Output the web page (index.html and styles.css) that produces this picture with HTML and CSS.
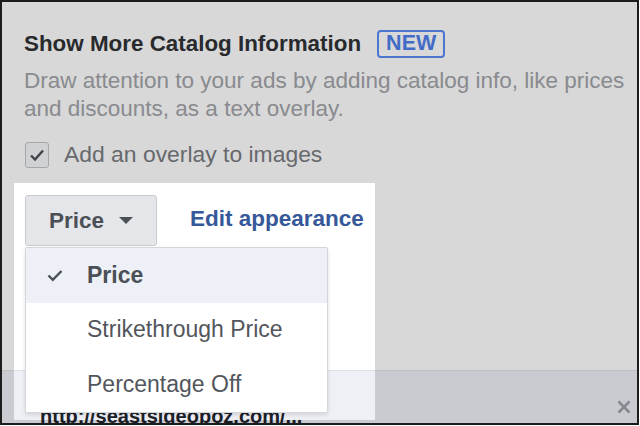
FILE: index.html
```html
<!DOCTYPE html>
<html>
<head>
<meta charset="utf-8">
<link rel="stylesheet" href="styles.css">
</head>
<body>
<div class="frame">
  <div class="main">
    <div class="title-row">
      <h2 class="title">Show More Catalog Information</h2>
      <span class="badge">NEW</span>
    </div>
    <p class="desc">Draw attention to your ads by adding catalog info, like prices and discounts, as a text overlay.</p>
    <label class="check-row">
      <span class="checkbox">
        <svg width="16" height="14" viewBox="0 0 16 14"><path d="M2 7.5 L6 11.5 L14 2.5" fill="none" stroke="#4b4f56" stroke-width="2.4"/></svg>
      </span>
      <span class="check-label">Add an overlay to images</span>
    </label>
    <div class="controls">
      <div class="dropdown">
        <button class="select-btn">Price <span class="caret"></span></button>
        <ul class="menu">
          <li class="item selected">
            <svg class="tick" width="16" height="13" viewBox="0 0 16 13"><path d="M1.5 6.5 L5.8 10.8 L14.5 2" fill="none" stroke="#4b4f56" stroke-width="2.4"/></svg>
            <span>Price</span>
          </li>
          <li class="item"><span>Strikethrough Price</span></li>
          <li class="item"><span>Percentage Off</span></li>
        </ul>
      </div>
      <a class="edit-link">Edit appearance</a>
    </div>
  </div>
  <div class="footer">
    <span class="url">http://seastsideoboz.com/...</span>
    <svg class="close" width="14" height="14" viewBox="0 0 14 14"><path d="M1.5 1.5 L12.5 12.5 M12.5 1.5 L1.5 12.5" stroke="#9da2ab" stroke-width="2.6"/></svg>
  </div>
  <div class="spotlight"></div>
</div>
</body>
</html>
```
FILE: styles.css
```css
* { box-sizing: border-box; }
html, body { margin: 0; padding: 0; background: #fff; }
body { font-family: "Liberation Sans", Arial, Helvetica, sans-serif; }

.frame {
  position: relative;
  width: 639px;
  height: 425px;
  border: 2px solid #1c1c1c;
  background: #fff;
  overflow: hidden;
  display: flex;
  flex-direction: column;
}

.main {
  flex: 1;
  padding: 28px 0 0 22px;
}

.title-row {
  display: flex;
  align-items: center;
  gap: 16px;
  height: 27px;
}
.title {
  margin: 0;
  font-size: 22.4px;
  font-weight: bold;
  color: #303237;
  white-space: nowrap;
}
.badge {
  display: inline-flex;
  align-items: center;
  height: 28px;
  padding: 0 7px;
  border: 2px solid #5a8cf6;
  border-radius: 4px;
  color: #4f80ec;
  font-size: 21.5px;
  font-weight: bold;
}

.desc {
  margin: 10px 0 0 0;
  width: 612px;
  font-size: 22.5px;
  line-height: 28px;
  color: #a2a4a9;
}

.check-row {
  display: flex;
  align-items: center;
  gap: 15px;
  margin-top: 18px;
}
.checkbox {
  width: 24px;
  height: 26px;
  border: 1px solid #c4c6ca;
  border-radius: 3px;
  background: #f6f7f9;
  display: flex;
  align-items: center;
  justify-content: center;
  margin-left: 1px;
}
.check-label {
  font-size: 22.9px;
  color: #7a7c81;
}

.controls {
  display: flex;
  align-items: center;
  gap: 33px;
  margin-top: 27px;
  margin-left: 1px;
}
.dropdown { position: relative; }
.select-btn {
  display: flex;
  align-items: center;
  gap: 15px;
  height: 51px;
  padding: 0 23px 0 23px;
  background: #e5e6ea;
  border: 1px solid #c8cbd0;
  border-radius: 3px;
  font-family: inherit;
  font-size: 22.5px;
  font-weight: bold;
  color: #4b4f56;
}
.caret {
  width: 0;
  height: 0;
  border-left: 7.5px solid transparent;
  border-right: 7.5px solid transparent;
  border-top: 7px solid #4b4f56;
}
.menu {
  position: absolute;
  z-index: 3;
  left: 0;
  top: 52px;
  width: 303px;
  margin: 0;
  padding: 0;
  list-style: none;
  background: #fff;
  border: 1px solid #d3d6db;
  border-radius: 2px;
  box-shadow: 0 2px 4px rgba(0, 0, 0, 0.12);
}
.item {
  display: flex;
  align-items: center;
  height: 54.5px;
  padding-left: 61px;
  font-size: 23px;
  color: #52565c;
  position: relative;
}
.item.selected {
  background: #edf0f7;
  font-weight: bold;
  color: #4b4f56;
}
.tick {
  position: absolute;
  left: 21px;
  top: 21px;
}
.edit-link {
  font-size: 22.5px;
  font-weight: bold;
  color: #365899;
  margin-top: -3px;
}

.footer {
  position: relative;
  height: 53px;
  background: #eef0f6;
  border-top: 1px solid #dfe1e6;
  display: flex;
  align-items: flex-end;
  justify-content: space-between;
  padding: 0 6px 9px 38px;
}
.url {
  font-size: 20px;
  font-weight: bold;
  color: #1d2129;
  line-height: 20px;
  margin-bottom: -12px;
}

.spotlight {
  position: absolute;
  z-index: 5;
  left: 12px;
  top: 181px;
  width: 361px;
  height: 237px;
  pointer-events: none;
  box-shadow: 0 0 0 1200px rgba(0, 0, 0, 0.153);
}
```
